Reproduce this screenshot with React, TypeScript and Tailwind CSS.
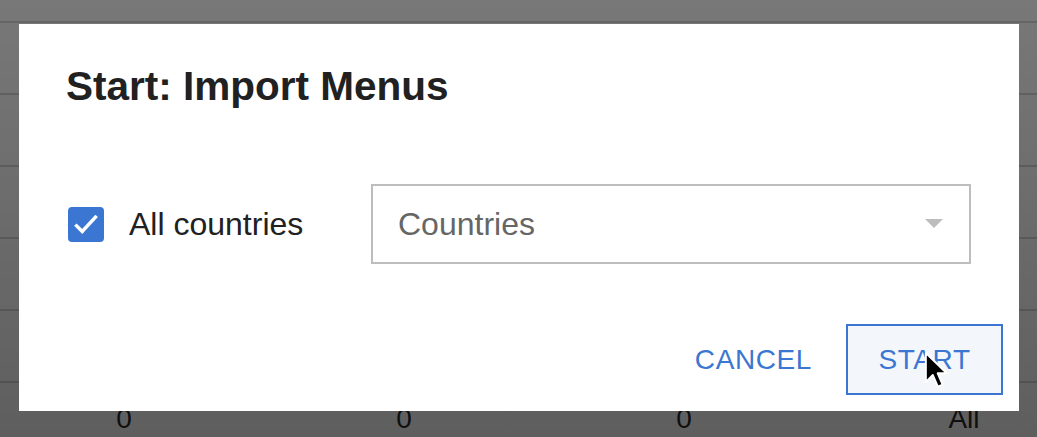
import { useState } from "react";

const font = { fontFamily: '"Liberation Sans", Arial, sans-serif' };

function Cursor() {
  return (
    <svg width="27" height="40" viewBox="0 0 18 27" className="absolute left-[922px] top-[350px]">
      <path
        d="M2.5 2 L2.5 21.5 L7.2 16.9 L10.6 24.8 L13.8 23.4 L10.5 15.7 L16.6 15.7 Z"
        fill="#000"
        stroke="#fff"
        strokeWidth="1.3"
        strokeLinejoin="round"
      />
    </svg>
  );
}

function Checkbox({ checked, onChange }: { checked: boolean; onChange: () => void }) {
  return (
    <button
      onClick={onChange}
      className={`w-[36px] h-[35px] rounded-[4px] flex items-center justify-center ${
        checked ? "bg-[#3a76d2]" : "border-2 border-[#757575] bg-white"
      }`}
    >
      {checked && (
        <svg width="30" height="30" viewBox="0 0 24 24">
          <path d="M3.5 12.5 L9 18 L20.5 5.5" fill="none" stroke="#fff" strokeWidth="2.8" />
        </svg>
      )}
    </button>
  );
}

export default function App() {
  const [allCountries, setAllCountries] = useState(true);
  const rows = [0, 1, 2, 3, 4];
  const totals = ["0", "0", "0", "All"];

  return (
    <div className="relative w-[1037px] h-[437px] overflow-hidden bg-white text-[#212121]" style={font}>
      {/* table behind the dialog */}
      <div className="h-[23px] border-b-2 border-[#d6d6d6]" />
      {rows.map((r) => (
        <div key={r} className="h-[72px] border-b-2 border-[#d6d6d6]" />
      ))}
      <div className="h-[72px] flex ml-[-16px] items-center text-[28px] text-[#2a2a2a]">
        {totals.map((t, i) => (
          <div key={i} className="w-[280px] shrink-0 text-center">
            {t}
          </div>
        ))}
      </div>

      {/* backdrop */}
      <div className="absolute inset-0 bg-linear-to-b from-[rgba(0,0,0,0.53)] to-[rgba(0,0,0,0.63)]" />

      {/* dialog */}
      <div className="absolute left-[19px] top-[24px] w-[1000px] h-[387px] bg-white flex flex-col">
        <h2 className="mt-[42px] pl-[47px] text-[40.5px] leading-[40px] font-bold text-[#212121]">
          Start: Import Menus
        </h2>

        <div className="mt-[78px] pl-[49px] flex items-center h-[80px]">
          <div className="w-[303px] flex items-center gap-[25px]">
            <Checkbox checked={allCountries} onChange={() => setAllCountries(!allCountries)} />
            <span className="text-[32px] text-[#212121]">All countries</span>
          </div>
          <div className="w-[600px] h-[80px] border-2 border-[#bdbdbd] flex items-center justify-between pl-[25px] pr-[26px]">
            <span className="text-[32px] text-[#666666]">Countries</span>
            <svg width="18" height="10" viewBox="0 0 18 10">
              <path d="M0 0 L18 0 L9 9 Z" fill="#bdbdbd" />
            </svg>
          </div>
        </div>

        <div className="mt-auto mb-[16px] mr-[16px] flex justify-end items-center gap-[18px]">
          <button className="h-[71px] px-[16px] text-[28px] tracking-[0.6px] text-[#3a76d2]">CANCEL</button>
          <button className="w-[157px] h-[71px] border-2 border-[#3a76d2] bg-[#f3f7fc] text-[28px] tracking-[0.6px] text-[#3a76d2]">
            START
          </button>
        </div>
      </div>

      <Cursor />
    </div>
  );
}
